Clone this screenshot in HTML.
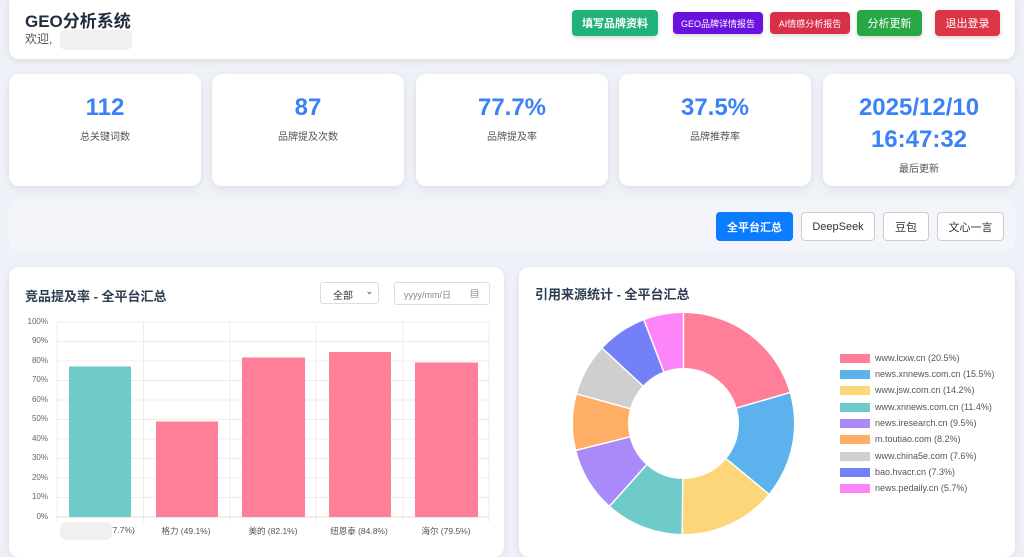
<!DOCTYPE html>
<html><head><meta charset="utf-8"><style>
*{box-sizing:border-box;margin:0;padding:0}
body{width:1024px;height:550px;overflow:hidden;background:#eef1f7;font-family:"Liberation Sans","Noto Sans CJK SC",sans-serif;color:#2c3e50;position:relative}
.card{position:absolute;background:#fff;border-radius:10px;box-shadow:0 2px 8px rgba(0,0,0,.08)}
.btn{position:absolute;color:#fff;font-size:11px;border-radius:4px;display:flex;align-items:center;justify-content:center;font-weight:bold;box-shadow:0 2px 4px rgba(0,0,0,.15)}
.stat{text-align:center}
.stat b{display:block;color:#3b82f6;font-size:24px;margin-top:20px}
.stat span{font-size:10px;color:#555;display:block;margin-top:6px}
.pb{position:absolute;top:212px;height:29px;border:1px solid #ccc;border-radius:4px;background:#fff;font-size:11px;display:flex;align-items:center;justify-content:center;color:#333}
.yl{position:absolute;left:18px;width:30px;text-align:right;font-size:8px;color:#666}
.xl{position:absolute;top:525px;font-size:8.5px;color:#555;text-align:center;width:86px}
.lg{position:absolute;left:840px;font-size:9px;color:#555;display:flex;align-items:center;height:10px}
.lg i{display:inline-block;width:30px;height:9px;margin-right:5px}
</style></head><body>
<div class="card" style="left:9px;top:-10px;width:1006px;height:69px"></div>
<div style="position:absolute;left:25px;top:7px;font-size:17px;font-weight:bold;color:#1f2d3d">GEO分析系统</div>
<div style="position:absolute;left:25px;top:30px;font-size:12px;color:#555">欢迎,</div>
<div style="position:absolute;left:60px;top:30px;width:72px;height:20px;background:#f0f0f0;border-radius:6px"></div>
<div class="btn" style="left:572px;top:10px;width:86px;height:26px;background:#21b27a">填写品牌资料</div>
<div class="btn" style="left:673px;top:12px;width:90px;height:22px;background:#6a11e0;font-size:9px;font-weight:normal">GEO品牌详情报告</div>
<div class="btn" style="left:770px;top:12px;width:80px;height:22px;background:#d9304a;font-size:9px;font-weight:normal">AI情感分析报告</div>
<div class="btn" style="left:857px;top:10px;width:65px;height:26px;background:#28a745;font-weight:normal">分析更新</div>
<div class="btn" style="left:935px;top:10px;width:65px;height:26px;background:#dc3545;font-weight:normal">退出登录</div>

<div class="card stat" style="left:9px;top:74px;width:192px;height:112px"><b>112</b><span>总关键词数</span></div>
<div class="card stat" style="left:212px;top:74px;width:192px;height:112px"><b>87</b><span>品牌提及次数</span></div>
<div class="card stat" style="left:416px;top:74px;width:192px;height:112px"><b>77.7%</b><span>品牌提及率</span></div>
<div class="card stat" style="left:619px;top:74px;width:192px;height:112px"><b>37.5%</b><span>品牌推荐率</span></div>
<div class="card stat" style="left:823px;top:74px;width:192px;height:112px"><b style="line-height:32px;margin-top:18px">2025/12/10<br>16:47:32</b><span style="margin-top:4px">最后更新</span></div>

<div style="position:absolute;left:9px;top:199px;width:1006px;height:52px;background:#f3f5fa;border-radius:10px"></div>
<div class="pb" style="left:716px;width:77px;background:#0a7cff;border-color:#0a7cff;color:#fff;font-weight:bold">全平台汇总</div>
<div class="pb" style="left:801px;width:74px">DeepSeek</div>
<div class="pb" style="left:883px;width:46px">豆包</div>
<div class="pb" style="left:937px;width:67px">文心一言</div>

<div class="card" style="left:9px;top:267px;width:495px;height:290px"></div>
<div style="position:absolute;left:25px;top:286px;font-size:13px;font-weight:bold">竞品提及率 - 全平台汇总</div>
<div style="position:absolute;left:320px;top:282px;width:59px;height:22px;border:1px solid #ddd;border-radius:3px;font-size:10px;padding:4px 0 0 12px;color:#333">全部 <span style="position:absolute;right:5px;top:3px;font-size:9px">⌄</span></div>
<div style="position:absolute;left:394px;top:282px;width:96px;height:23px;border:1px solid #ddd;border-radius:3px;font-size:9px;padding:5px 0 0 9px;color:#888">yyyy/mm/日 <span style="position:absolute;right:10px;top:4px;color:#444">▤</span></div>
<svg style="position:absolute;left:0;top:0" width="512" height="550">
<g stroke="#ececec" stroke-width="1">
<line x1="57" y1="322" x2="489" y2="322"/><line x1="57" y1="341.5" x2="489" y2="341.5"/><line x1="57" y1="361" x2="489" y2="361"/><line x1="57" y1="380.5" x2="489" y2="380.5"/><line x1="57" y1="400" x2="489" y2="400"/><line x1="57" y1="419.5" x2="489" y2="419.5"/><line x1="57" y1="439" x2="489" y2="439"/><line x1="57" y1="458.5" x2="489" y2="458.5"/><line x1="57" y1="478" x2="489" y2="478"/><line x1="57" y1="497.5" x2="489" y2="497.5"/>
<line x1="57" y1="322" x2="57" y2="522"/><line x1="143.5" y1="322" x2="143.5" y2="522"/><line x1="230" y1="322" x2="230" y2="522"/><line x1="316" y1="322" x2="316" y2="522"/><line x1="403" y1="322" x2="403" y2="522"/><line x1="489" y1="322" x2="489" y2="522"/>
</g>
<line x1="57" y1="517" x2="489" y2="517" stroke="#ddd"/>
<rect x="69" y="366.5" width="62" height="150.5" fill="#6fcbca"/>
<rect x="156" y="421.5" width="62" height="95.5" fill="#fe7f97"/>
<rect x="242" y="357.5" width="63" height="159.5" fill="#fe7f97"/>
<rect x="329" y="352" width="62" height="165" fill="#fe7f97"/>
<rect x="415" y="362.5" width="63" height="154.5" fill="#fe7f97"/>
</svg>
<div class="yl" style="top:317px">100%</div><div class="yl" style="top:336px">90%</div><div class="yl" style="top:356px">80%</div><div class="yl" style="top:375px">70%</div><div class="yl" style="top:395px">60%</div><div class="yl" style="top:414px">50%</div><div class="yl" style="top:434px">40%</div><div class="yl" style="top:453px">30%</div><div class="yl" style="top:473px">20%</div><div class="yl" style="top:492px">10%</div><div class="yl" style="top:512px">0%</div>
<div class="xl" style="left:57px;padding-left:40px">(77.7%)</div>
<div style="position:absolute;left:60px;top:522px;width:52px;height:18px;background:#f0f0f0;border-radius:6px"></div>
<div class="xl" style="left:143px">格力 (49.1%)</div>
<div class="xl" style="left:230px">美的 (82.1%)</div>
<div class="xl" style="left:316px">纽恩泰 (84.8%)</div>
<div class="xl" style="left:403px">海尔 (79.5%)</div>

<div class="card" style="left:519px;top:267px;width:496px;height:290px"></div>
<div style="position:absolute;left:535px;top:284px;font-size:13px;font-weight:bold">引用来源统计 - 全平台汇总</div>
<svg style="position:absolute;left:573px;top:313px" width="221" height="221" viewBox="-110.5 -110.5 221 221">
<g transform="rotate(-90)" fill="none" stroke-width="55">
<circle r="83" pathLength="100" stroke="#fe7f97" stroke-dasharray="20.5 79.5" stroke-dashoffset="0"/>
<circle r="83" pathLength="100" stroke="#5bb2ec" stroke-dasharray="15.5 84.5" stroke-dashoffset="-20.5"/>
<circle r="83" pathLength="100" stroke="#fed67a" stroke-dasharray="14.2 85.8" stroke-dashoffset="-36"/>
<circle r="83" pathLength="100" stroke="#6fcbca" stroke-dasharray="11.4 88.6" stroke-dashoffset="-50.2"/>
<circle r="83" pathLength="100" stroke="#a98af8" stroke-dasharray="9.5 90.5" stroke-dashoffset="-61.6"/>
<circle r="83" pathLength="100" stroke="#feaf65" stroke-dasharray="8.2 91.8" stroke-dashoffset="-71.1"/>
<circle r="83" pathLength="100" stroke="#cfcfcf" stroke-dasharray="7.6 92.4" stroke-dashoffset="-79.3"/>
<circle r="83" pathLength="100" stroke="#7480f8" stroke-dasharray="7.3 92.7" stroke-dashoffset="-86.9"/>
<circle r="83" pathLength="100" stroke="#fd85f8" stroke-dasharray="5.8 94.2" stroke-dashoffset="-94.2"/>
</g>
<g stroke="#fff" stroke-width="1.5">
<line x1="0" y1="0" x2="0" y2="-111" transform="rotate(0)"/><line x1="0" y1="0" x2="0" y2="-111" transform="rotate(73.8)"/><line x1="0" y1="0" x2="0" y2="-111" transform="rotate(129.6)"/><line x1="0" y1="0" x2="0" y2="-111" transform="rotate(180.7)"/><line x1="0" y1="0" x2="0" y2="-111" transform="rotate(221.8)"/><line x1="0" y1="0" x2="0" y2="-111" transform="rotate(256)"/><line x1="0" y1="0" x2="0" y2="-111" transform="rotate(285.5)"/><line x1="0" y1="0" x2="0" y2="-111" transform="rotate(312.8)"/><line x1="0" y1="0" x2="0" y2="-111" transform="rotate(339.1)"/>
</g>
<circle r="55" fill="#fff"/>
</svg>
<div class="lg" style="top:353px"><i style="background:#fe7f97"></i>www.lcxw.cn (20.5%)</div>
<div class="lg" style="top:369px"><i style="background:#5bb2ec"></i>news.xnnews.com.cn (15.5%)</div>
<div class="lg" style="top:385px"><i style="background:#fed67a"></i>www.jsw.com.cn (14.2%)</div>
<div class="lg" style="top:402px"><i style="background:#6fcbca"></i>www.xnnews.com.cn (11.4%)</div>
<div class="lg" style="top:418px"><i style="background:#a98af8"></i>news.iresearch.cn (9.5%)</div>
<div class="lg" style="top:434px"><i style="background:#feaf65"></i>m.toutiao.com (8.2%)</div>
<div class="lg" style="top:451px"><i style="background:#cfcfcf"></i>www.china5e.com (7.6%)</div>
<div class="lg" style="top:467px"><i style="background:#7480f8"></i>bao.hvacr.cn (7.3%)</div>
<div class="lg" style="top:483px"><i style="background:#fd85f8"></i>news.pedaily.cn (5.7%)</div>
</body></html>
